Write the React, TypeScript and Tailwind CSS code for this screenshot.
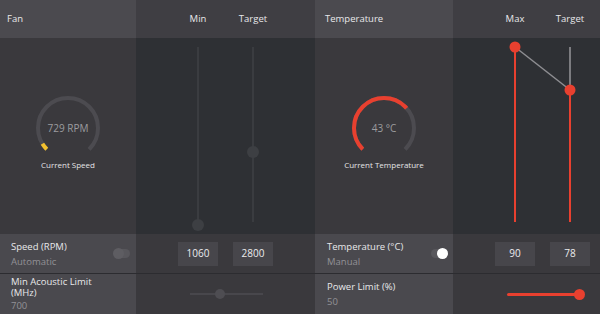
import { FC } from "react";

const CIRC = 2 * Math.PI * 30;
const ARC = CIRC * 0.75; // 270° gauge

const Gauge: FC<{ text: string; label: string; sweep: number; color: string }> = ({ text, label, sweep, color }) => {
    return (
        <div className="flex flex-col items-center pt-[55px]">
            <div className="relative w-[70px] h-[70px]">
                <svg width="70" height="70" viewBox="0 0 70 70">
                    <circle cx="35" cy="35" r="30" fill="none" stroke="#4c4b50" strokeWidth="4"
                        strokeDasharray={`${ARC} ${CIRC}`} transform="rotate(135 35 35)" />
                    <circle cx="35" cy="35" r="30" fill="none" stroke={color} strokeWidth="4"
                        strokeDasharray={`${ARC * sweep} ${CIRC}`} transform="rotate(135 35 35)" />
                </svg>
                {/* значение поверх шкалы */}
                <div className="absolute inset-0 flex items-center justify-center text-[10px] text-[#9c9c9f]">
                    {text}
                </div>
            </div>
            <div className="-mt-[4px] text-[8px] leading-[12px] text-[#e4e4e6]">{label}</div>
        </div>
    );
};

const Toggle: FC<{ on?: boolean }> = ({ on }) => (
    <div className="relative w-[16px] h-[9px] rounded-full bg-[#58575c]">
        <div className={on
            ? "absolute right-[-1px] top-[-1px] w-[11px] h-[11px] rounded-full bg-white"
            : "absolute left-[-1px] top-[-1px] w-[11px] h-[11px] rounded-full bg-[#5e5d62]"} />
    </div>
);

const ValueBox: FC<{ value: string }> = ({ value }) => (
    <div className="w-[40px] h-[24px] bg-[#47464b] flex items-center justify-center text-[10px] text-[#ececee]">
        {value}
    </div>
);

const App: FC = () => {
    return (
        <div
            className="w-[600px] h-[314px] grid grid-cols-[136px_179px_138px_147px] grid-rows-[38px_196px_39px_41px] text-[#e8e8ea] overflow-hidden"
            style={{ fontFamily: '"Open Sans", "Noto Sans", sans-serif' }}
        >
            {/* header */}
            <div className="bg-[#4b4a4f] flex items-center pl-[7px] text-[9.5px]">Fan</div>
            <div className="bg-[#3f3e43] flex items-center pl-[42px] gap-[15px] text-[9.5px]">
                <span className="w-[40px] text-center">Min</span>
                <span className="w-[40px] text-center">Target</span>
            </div>
            <div className="bg-[#4b4a4f] flex items-center pl-[10px] text-[9.5px]">Temperature</div>
            <div className="bg-[#3f3e43] flex items-center pl-[42px] gap-[15px] text-[9.5px]">
                <span className="w-[40px] text-center">Max</span>
                <span className="w-[40px] text-center">Target</span>
            </div>

            {/* body */}
            <div className="bg-[#3a393d]">
                <Gauge text="729 RPM" label="Current Speed" sweep={0.05} color="#f2c12e" />
            </div>
            <div className="bg-[#2e3034] flex pl-[42px] gap-[15px]">
                <div className="relative w-[40px]">
                    <div className="absolute left-[19px] top-[9px] h-[178px] w-[2px] bg-[#3a3c40]" />
                    <div className="absolute left-[14px] top-[181px] w-[12px] h-[12px] rounded-full bg-[#3d3f43]" />
                </div>
                <div className="relative w-[40px]">
                    <div className="absolute left-[19px] top-[9px] h-[175px] w-[2px] bg-[#3a3c40]" />
                    <div className="absolute left-[14px] top-[108px] w-[12px] h-[12px] rounded-full bg-[#3d3f43]" />
                </div>
            </div>
            <div className="bg-[#3a393d]">
                <Gauge text="43 °C" label="Current Temperature" sweep={0.68} color="#e8402f" />
            </div>
            <div className="bg-[#2e3034]">
                <svg width="147" height="196" viewBox="0 0 147 196">
                    <line x1="62" y1="9" x2="62" y2="184" stroke="#e8402f" strokeWidth="2" />
                    <line x1="117" y1="9" x2="117" y2="52" stroke="#7c7c80" strokeWidth="2" />
                    <line x1="117" y1="52" x2="117" y2="184" stroke="#e8402f" strokeWidth="2" />
                    <line x1="62" y1="9" x2="117" y2="52" stroke="#8e8e92" strokeWidth="1.5" />
                    <circle cx="62" cy="9" r="5.5" fill="#e8402f" />
                    <circle cx="117" cy="52" r="5.5" fill="#e8402f" />
                </svg>
            </div>

            {/* row 1 */}
            <div className="bg-[#4a494e] flex items-center justify-between pl-[11px] pr-[6px]">
                <div className="text-[9.5px] leading-[15px]">
                    <div>Speed (RPM)</div>
                    <div className="text-[#929196]">Automatic</div>
                </div>
                <Toggle />
            </div>
            <div className="bg-[#3a393d] flex items-center pl-[42px] gap-[15px]">
                <ValueBox value="1060" />
                <ValueBox value="2800" />
            </div>
            <div className="bg-[#4a494e] flex items-center justify-between pl-[12px] pr-[6px]">
                <div className="text-[9.5px] leading-[15px]">
                    <div>Temperature (°C)</div>
                    <div className="text-[#929196]">Manual</div>
                </div>
                <Toggle on />
            </div>
            <div className="bg-[#3a393d] flex items-center pl-[42px] gap-[15px]">
                <ValueBox value="90" />
                <ValueBox value="78" />
            </div>

            {/* row 2 */}
            <div className="bg-[#4a494e] border-t border-[#2c2c30] flex flex-col justify-center pl-[11px]">
                <div className="w-[95px] text-[9.5px] leading-[11px]">Min Acoustic Limit (MHz)</div>
                <div className="text-[9.5px] leading-[15px] text-[#929196]">700</div>
            </div>
            <div className="bg-[#3a393d] border-t border-[#2c2c30] flex items-center pl-[54px]">
                <div className="relative w-[73px] h-[2px] bg-[#48474c]">
                    <div className="absolute left-[25px] top-[-4px] w-[10px] h-[10px] rounded-full bg-[#4e4d52]" />
                </div>
            </div>
            <div className="bg-[#4a494e] border-t border-[#2c2c30] flex flex-col justify-center pl-[12px]">
                <div className="text-[9.5px] leading-[15px]">Power Limit (%)</div>
                <div className="text-[9.5px] leading-[15px] text-[#929196]">50</div>
            </div>
            <div className="bg-[#3a393d] border-t border-[#2c2c30] flex items-center pl-[54px]">
                <div className="relative w-[73px] h-[3px] rounded-full bg-[#e8402f]">
                    <div className="absolute right-[-5px] top-[-4px] w-[11px] h-[11px] rounded-full bg-[#e8402f]" />
                </div>
            </div>
        </div>
    );
};

export default App;
